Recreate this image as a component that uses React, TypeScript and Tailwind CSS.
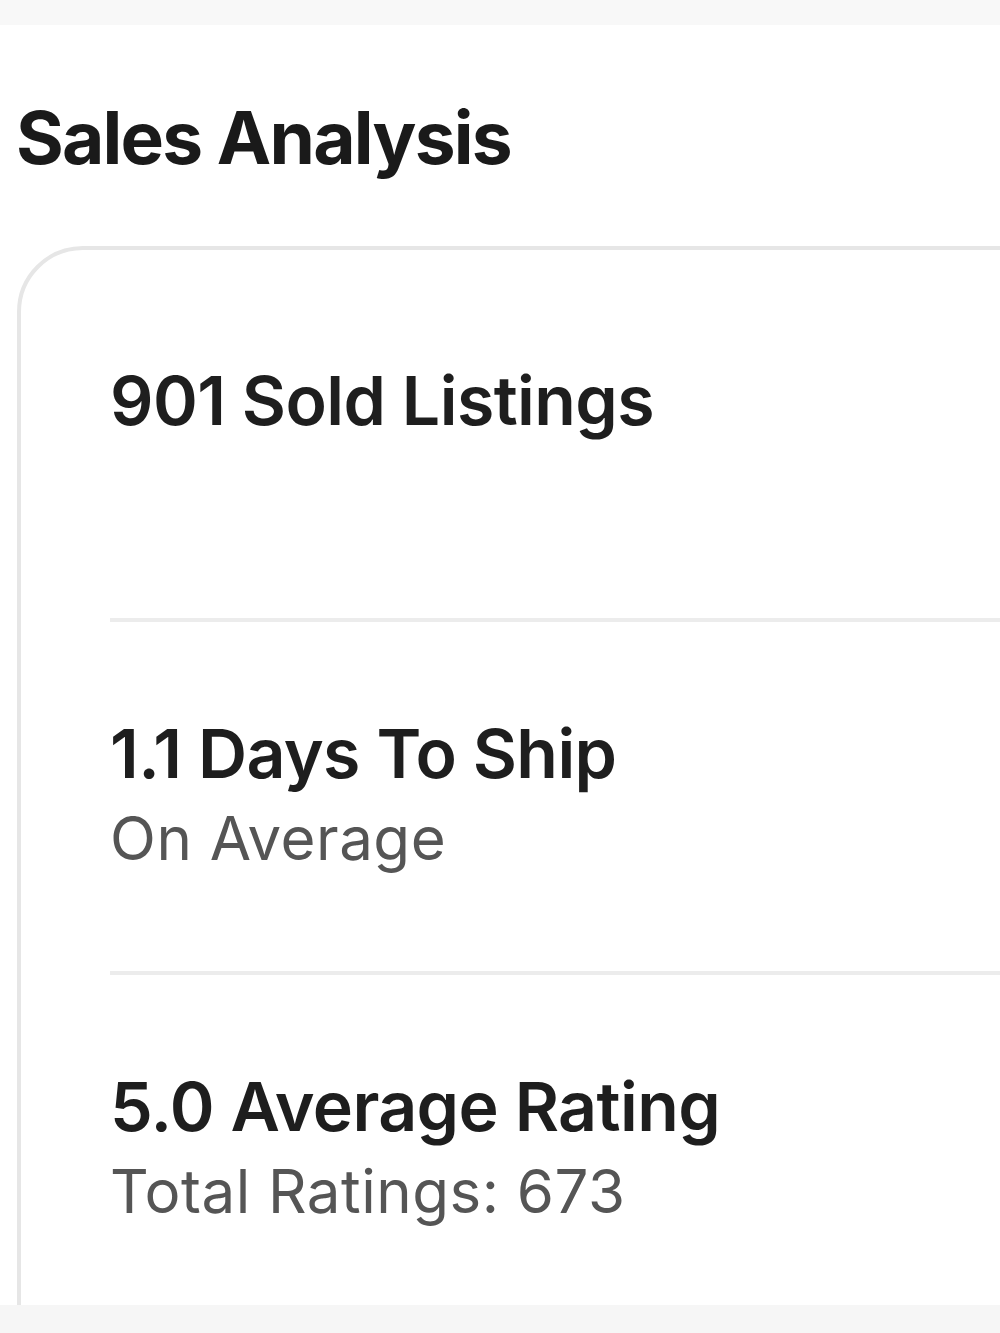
import React from "react";

const sections = [
  { title: "901 Sold Listings", sub: "" },
  { title: "1.1 Days To Ship", sub: "On Average" },
  { title: "5.0 Average Rating", sub: "Total Ratings: 673" },
];

export default function App() {
  return (
    <div
      className="w-[1000px] h-[1333px] overflow-hidden bg-white flex flex-col"
      style={{ fontFamily: "Inter, 'Noto Sans', sans-serif" }}
    >
      <div className="h-[25px] shrink-0 bg-[#f8f8f8]" />
      <div className="flex-1 overflow-hidden">
        <h1 className="mt-[68px] pl-[16px] text-[73px] leading-[90px] font-bold text-[#1a1a1a] tracking-[-1.8px]">
          Sales Analysis
        </h1>
        <div className="mt-[63px] ml-[17px] w-[1100px] h-[1300px] border-[4px] border-[#e6e6e6] rounded-[66px] pt-[19px] pl-[89px]">
          {sections.map((s, i) => (
            <div
              key={i}
              className="pt-[91px] pb-[88px] border-b-[4px] border-[#ececec]"
            >
              <div className="text-[68px] leading-[80px] font-semibold text-[#1e1e1e] tracking-[-0.6px]">
                {s.title}
              </div>
              <div className="text-[60px] leading-[90px] font-normal text-[#555555] tracking-[0.5px]">
                {s.sub || "\u00a0"}
              </div>
            </div>
          ))}
        </div>
      </div>
      <div className="h-[28px] shrink-0 bg-[#f6f6f6]" />
    </div>
  );
}
